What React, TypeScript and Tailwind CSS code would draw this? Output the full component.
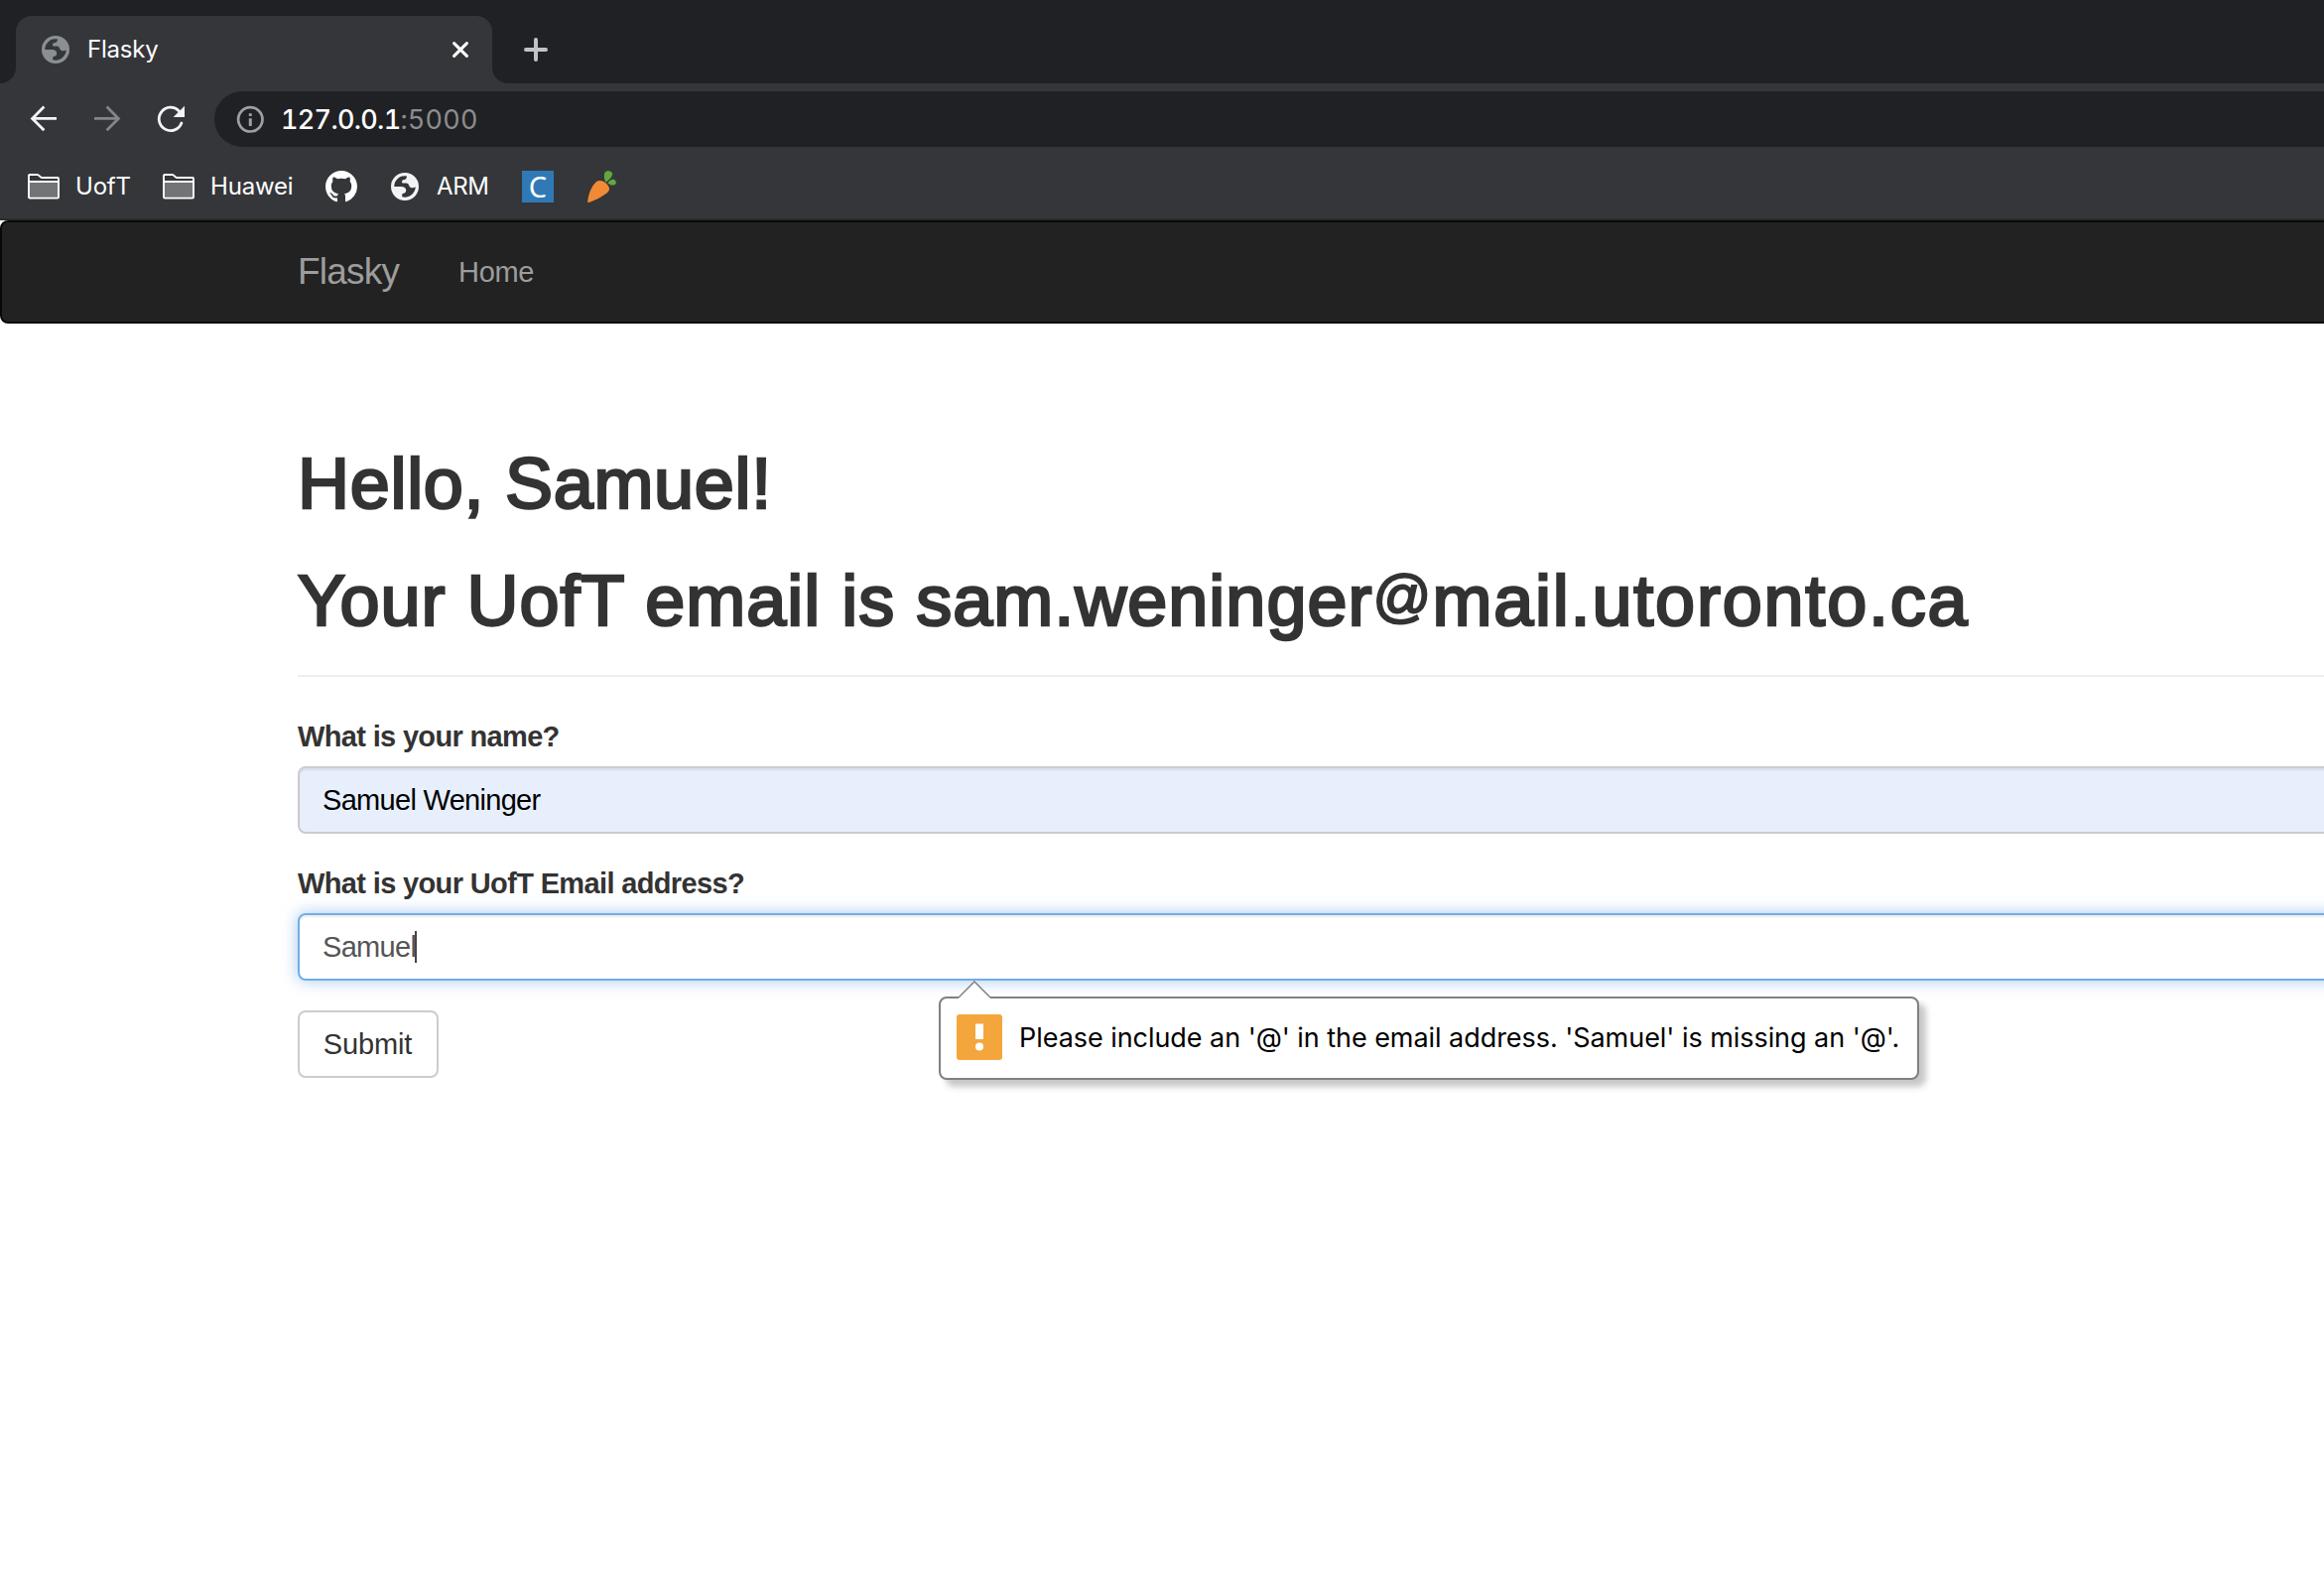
import React from 'react';

function Globe({ className }: { className?: string }) {
  return (
    <svg className={className} width="28" height="28" viewBox="0 0 28 28">
      <path
        fill="currentColor"
        fillRule="evenodd"
        d="M14 0a14 14 0 1 1 0 28a14 14 0 0 1 0-28ZM3.2 13.9H10.4Q14.8 14 15.2 17.2Q15.3 20.4 12.6 20.8Q11.2 21 11.2 22.2V24.3A10.7 10.7 0 0 0 24.7 14.2Q23 15.6 20.6 15.2Q18.4 14.8 18 12.6Q17.6 10.6 15.4 10.6H11.8Q10.8 10.4 11 8.8Q11.2 7.2 13.6 7Q15.8 6.6 15.8 4.8V3.3A10.8 10.8 0 0 0 3.2 13.9Z"
      />
    </svg>
  );
}

function Folder() {
  return (
    <svg width="32" height="26" viewBox="0 0 32 26">
      <rect x="2" y="9" width="28" height="15" fill="#737476" />
      <path
        d="M1 23.6V2a1 1 0 0 1 1-1h7.6a1.6 1.6 0 0 1 1 .4l2.6 2.2a1.6 1.6 0 0 0 1 .4H30a1 1 0 0 1 1 1v18.6a1 1 0 0 1-1 1H2a1 1 0 0 1-1-1ZM1 8h30"
        fill="none"
        stroke="#fff"
        strokeWidth="1.9"
      />
    </svg>
  );
}

function GitHub() {
  return (
    <svg width="32" height="32" viewBox="0 0 16 16" fill="#fff">
      <path d="M8 0C3.58 0 0 3.58 0 8c0 3.54 2.29 6.53 5.47 7.59.4.07.55-.17.55-.38 0-.19-.01-.82-.01-1.49-2.01.37-2.53-.49-2.69-.94-.09-.23-.48-.94-.82-1.13-.28-.15-.68-.52-.01-.53.63-.01 1.08.58 1.23.82.72 1.21 1.87.87 2.33.66.07-.52.28-.87.51-1.07-1.78-.2-3.64-.89-3.64-3.95 0-.87.31-1.59.82-2.15-.08-.2-.36-1.02.08-2.12 0 0 .67-.21 2.2.82.64-.18 1.32-.27 2-.27s1.36.09 2 .27c1.53-1.04 2.2-.82 2.2-.82.44 1.1.16 1.92.08 2.12.51.56.82 1.27.82 2.15 0 3.07-1.87 3.75-3.65 3.95.29.25.54.73.54 1.48 0 1.07-.01 1.93-.01 2.2 0 .21.15.46.55.38A8.01 8.01 0 0 0 16 8c0-4.42-3.58-8-8-8Z" />
    </svg>
  );
}

function Carrot() {
  return (
    <svg width="30" height="32" viewBox="0 0 30 32">
      <path d="M.2 31.7C.8 24.5 4 15.5 8.6 11.6C12.2 8.8 16.6 10.2 19.6 13.4C22.8 16.8 23 20 19.2 22.8C13.4 27 6.4 30.8.9 32Q.2 32.2.2 31.7Z" fill="#f18a35" />
      <path d="M18.3 11.2C16.6 7.4 16.2 3.4 17.8 1.4C19.6-.4 23.6-.2 24.8 2C26 5 22.6 9 18.9 11.4Z" fill="#62a83f" />
      <path d="M20.3 12.4C22 9.6 25.2 7.8 27.4 9.2C29.4 10.8 29.2 13.4 27.2 14.2C25 14.9 22.2 14 20.3 12.4Z" fill="#62a83f" />
    </svg>
  );
}

function TabStrip() {
  return (
    <div className="bg-[#202124] pt-4">
      <div className="flex h-[68px] bg-[#35363a]">
        <div className="w-4 rounded-br-2xl bg-[#202124]" />
        <div className="w-[480px] bg-[#202124]">
          <div className="flex h-full items-center rounded-t-2xl bg-[#35363a] pl-[26px] pr-6 text-white">
            <Globe className="text-[#8a8f94]" />
            <span className="ml-[18px] flex-1 text-[24px] tracking-[-0.2px]">Flasky</span>
            <svg width="16" height="16" viewBox="0 0 16 16" fill="none" stroke="#fff" strokeWidth="3" strokeLinecap="round">
              <path d="M1.6 1.6l12.8 12.8M14.4 1.6L1.6 14.4" />
            </svg>
          </div>
        </div>
        <div className="flex flex-1 items-center rounded-bl-2xl bg-[#202124] pl-8">
          <svg width="24" height="24" viewBox="0 0 24 24" stroke="#c1c3c7" strokeWidth="4" strokeLinecap="round">
            <path d="M12 2v20M2 12h20" />
          </svg>
        </div>
      </div>
    </div>
  );
}

function Toolbar() {
  return (
    <div className="flex h-[72px] items-center">
      <div className="flex w-[216px] gap-8 pl-7">
        <svg width="32" height="32" viewBox="0 0 32 32" fill="none" stroke="#f3f4f6" strokeWidth="2.8">
          <path d="M29 15.4H4.6M16.4 3.6L4.6 15.4l11.8 11.8" />
        </svg>
        <svg width="32" height="32" viewBox="0 0 32 32" fill="none" stroke="#858588" strokeWidth="2.8">
          <path d="M3 15.4h24.4M15.6 3.6l11.8 11.8l-11.8 11.8" />
        </svg>
        <svg width="32" height="32" viewBox="0 0 32 32">
          <path d="M24.3 7.7A11.7 11.7 0 1 0 26.9 20" fill="none" stroke="#f3f4f6" strokeWidth="2.8" strokeLinecap="round" />
          <path d="M30 2.7V14H18.7Z" fill="#f3f4f6" />
        </svg>
      </div>
      <div className="flex h-14 flex-1 items-center rounded-l-full bg-[#202124] pl-[22px]">
        <svg width="28" height="28" viewBox="0 0 28 28">
          <circle cx="14.3" cy="14.3" r="12.2" fill="none" stroke="#9aa0a6" strokeWidth="2.7" />
          <path d="M12.8 8.2h3v2.9h-3zM12.8 13.2h3v7.8h-3z" fill="#9aa0a6" />
        </svg>
        <span className="ml-[17px] mt-[2px] text-[27px] font-medium tabular-nums tracking-[-0.7px] text-white">127.0.0.1</span>
        <span className="mt-[2px] text-[27px] tabular-nums tracking-[0.2px] text-[#8c8d90]">:5000</span>
      </div>
    </div>
  );
}

function Bookmarks() {
  return (
    <div className="flex h-16 items-center pl-7 text-[24px] tracking-[-0.2px] text-white">
      <Folder />
      <span className="ml-4 w-[88px]">UofT</span>
      <Folder />
      <span className="ml-4 w-[116px]">Huawei</span>
      <GitHub />
      <Globe className="ml-[34px] text-[#f1f3f4]" />
      <span className="ml-[18px] w-[86px] tracking-[-0.4px]">ARM</span>
      <span className="flex size-8 items-center justify-center bg-[#2f7ab6] font-['Noto_Sans'] text-[29px] leading-8 tracking-normal">C</span>
      <span className="ml-[34px]">
        <Carrot />
      </span>
    </div>
  );
}

function ValidationBubble() {
  return (
    <div className="absolute left-[644px] top-[82px] flex h-[84px] w-[988px] items-center rounded-lg border-2 border-[#808080] bg-white pl-4 font-[Inter] text-[27px] shadow-[7px_7px_6px_rgba(0,0,0,0.22)]">
      <svg className="absolute -top-[18px] left-[18px]" width="32" height="20" viewBox="0 0 32 20">
        <path d="M0 20V17L16 1L32 17V20Z" fill="#fff" />
        <path d="M0 17L16 1L32 17" fill="none" stroke="#808080" strokeWidth="1.5" />
      </svg>
      <svg className="-mt-[2px]" width="46" height="46" viewBox="0 0 46 46">
        <rect width="46" height="46" rx="3" fill="#f4a63d" />
        <path d="M19 9.5h8v15.5h-8z" fill="#fff" />
        <circle cx="23" cy="32.4" r="4" fill="#fff" />
      </svg>
      <span className="ml-[17px] mt-[1px] whitespace-nowrap tracking-[-0.05px] text-black">
        Please include an '@' in the email address. 'Samuel' is missing an '@'.
      </span>
    </div>
  );
}

export default function App() {
  return (
    <div className="h-[1608px] w-[2342px] overflow-hidden bg-white font-['Liberation_Sans',sans-serif]">
      <header className="bg-[#35363a] font-[Inter]">
        <TabStrip />
        <Toolbar />
        <Bookmarks />
        <div className="h-[2px] bg-[#2a2b2d]" />
      </header>

      <nav className="flex h-[104px] w-[2400px] items-center rounded-lg border-2 border-[#080808] bg-[#222] pl-[298px] text-[#9d9d9d]">
        <span className="w-[162px] text-[37px] tracking-[-0.8px]">Flasky</span>
        <span className="mt-[1px] text-[29px] tracking-[-0.3px]">Home</span>
      </nav>

      <main className="ml-[300px] w-[2280px] pt-[121px] text-[29px] text-[#333]">
        <h1 className="mb-[38px] text-[72px] leading-[80px] tracking-[0.7px] [-webkit-text-stroke:2.6px_#333]">Hello, Samuel!</h1>
        <h1 className="h-20 whitespace-nowrap text-[72px] leading-[80px] tracking-[1px] [-webkit-text-stroke:2.6px_#333]">
          Your UofT email is sam.weninger
          <span className="relative -top-[10px] text-[58px] leading-none [-webkit-text-stroke:2px_#333]">@</span>
          <span className="tracking-[1.8px]">mail.utoronto.ca</span>
        </h1>
        <hr className="mb-[39px] mt-[35px] border-t-2 border-[#eee]" />
        <form>
          <label className="mb-[9px] block font-bold leading-[42px] tracking-[-0.66px]">What is your name?</label>
          <div className="mb-[29px] flex h-[68px] items-center rounded-lg border-2 border-[#ccc] bg-[#e8effc] pl-[23px] pt-[1px] tracking-[-0.7px] text-black shadow-[inset_0_2px_2px_rgba(0,0,0,0.075)]">
            Samuel Weninger
          </div>
          <label className="mb-[9px] block font-bold leading-[42px] tracking-[-0.64px]">What is your UofT Email address?</label>
          <div className="relative mb-[30px] flex h-[68px] items-center rounded-lg border-2 border-[#72ade6] pl-[23px] pt-[1px] tracking-[-0.7px] text-[#555] shadow-[inset_0_2px_2px_rgba(0,0,0,0.075),0_0_16px_rgba(102,165,233,0.6)]">
            Samuel
            <span className="-ml-[1px] -mt-[1px] h-8 w-[2px] bg-[#444]" />
            <ValidationBubble />
          </div>
          <button type="button" className="h-[68px] w-[142px] rounded-lg border-2 border-[#ccc] bg-white pr-[1px] pt-[1px] tracking-[-0.1px]">
            Submit
          </button>
        </form>
      </main>
    </div>
  );
}
